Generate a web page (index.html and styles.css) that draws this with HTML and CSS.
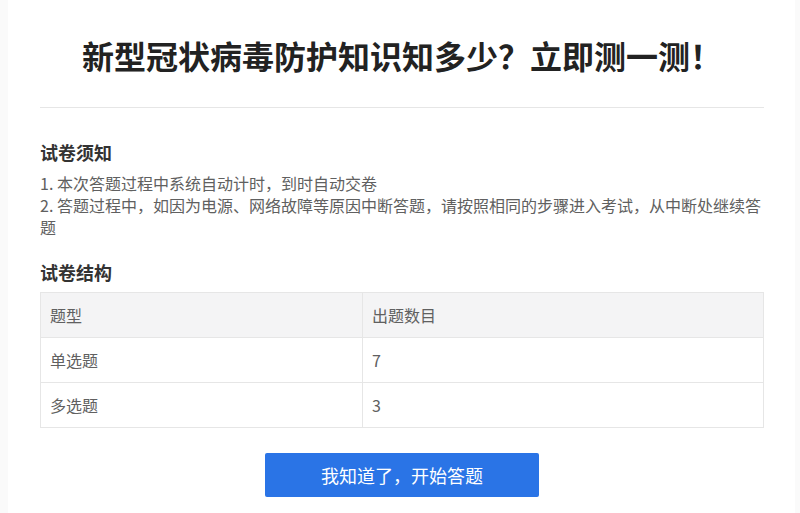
FILE: index.html
```html
<!DOCTYPE html>
<html lang="zh-CN">
<head>
    <meta charset="UTF-8">
    <meta name="viewport" content="width=device-width, initial-scale=1.0">
    <title>新型冠状病毒防护知识知多少</title>
    <link rel="stylesheet" href="styles.css">
</head>
<body>
    <div class="exam-page">
        <div class="exam-header">
            <h1>新型冠状病毒防护知识知多少？立即测一测！</h1>
        </div>

        <div class="exam-section">
            <h2 class="section-title">试卷须知</h2>
            <ol class="notice-list">
                <li>1. 本次答题过程中系统自动计时，到时自动交卷</li>
                <li>2. 答题过程中，如因为电源、网络故障等原因中断答题，请按照相同的步骤进入考试，从中断处继续答题</li>
            </ol>
        </div>

        <div class="exam-section">
            <h2 class="section-title section-title-gap">试卷结构</h2>
            <table class="structure-table">
                <thead>
                    <tr>
                        <th class="col-type">题型</th>
                        <th>出题数目</th>
                    </tr>
                </thead>
                <tbody>
                    <tr>
                        <td>单选题</td>
                        <td>7</td>
                    </tr>
                    <tr>
                        <td>多选题</td>
                        <td>3</td>
                    </tr>
                </tbody>
            </table>
        </div>

        <div class="exam-actions">
            <button type="button" class="btn-start">我知道了，开始答题</button>
        </div>
    </div>
</body>
</html>
```

FILE: styles.css
```css
:root {
    --text-title: #222222;
    --text-heading: #333333;
    --text-body: #606060;
    --border-light: #e6e6e6;
    --bg-page: #fafafa;
    --bg-head: #f4f4f5;
    --primary-blue: #2a74e6;
}

* {
    box-sizing: border-box;
    margin: 0;
    padding: 0;
}

body {
    font-family: "Noto Sans CJK SC", "Noto Sans", sans-serif;
    background: var(--bg-page);
    color: var(--text-body);
    height: 513px;
    overflow: hidden;
}

.exam-page {
    background: #ffffff;
    margin: 0 5px 0 8px;
    padding: 0 31px 0 32px;
    min-height: 513px;
}

.exam-header {
    padding: 34px 0 30px;
    border-bottom: 1px solid var(--border-light);
    text-align: center;
}

.exam-header h1 {
    font-size: 32px;
    line-height: 43px;
    font-weight: 700;
    color: var(--text-title);
}

.section-title {
    margin-top: 31px;
    font-size: 18px;
    line-height: 26px;
    font-weight: 700;
    color: var(--text-heading);
}

.section-title-gap {
    margin-top: 21px;
}

.notice-list {
    list-style: none;
    margin-top: 7px;
    font-size: 16px;
    line-height: 22px;
}

.structure-table {
    width: 100%;
    margin-top: 7px;
    border-collapse: collapse;
    table-layout: fixed;
    font-size: 16px;
    color: var(--text-body);
}

.structure-table th,
.structure-table td {
    height: 45px;
    padding: 0 9px;
    border: 1px solid var(--border-light);
    text-align: left;
    font-weight: 400;
}

.structure-table th {
    background: var(--bg-head);
}

.col-type {
    width: 322px;
}

.exam-actions {
    display: flex;
    justify-content: center;
    padding-top: 25px;
}

.btn-start {
    width: 274px;
    height: 44px;
    background: var(--primary-blue);
    color: #ffffff;
    border: none;
    border-radius: 2px;
    font-family: inherit;
    font-size: 18px;
    cursor: pointer;
}
```
